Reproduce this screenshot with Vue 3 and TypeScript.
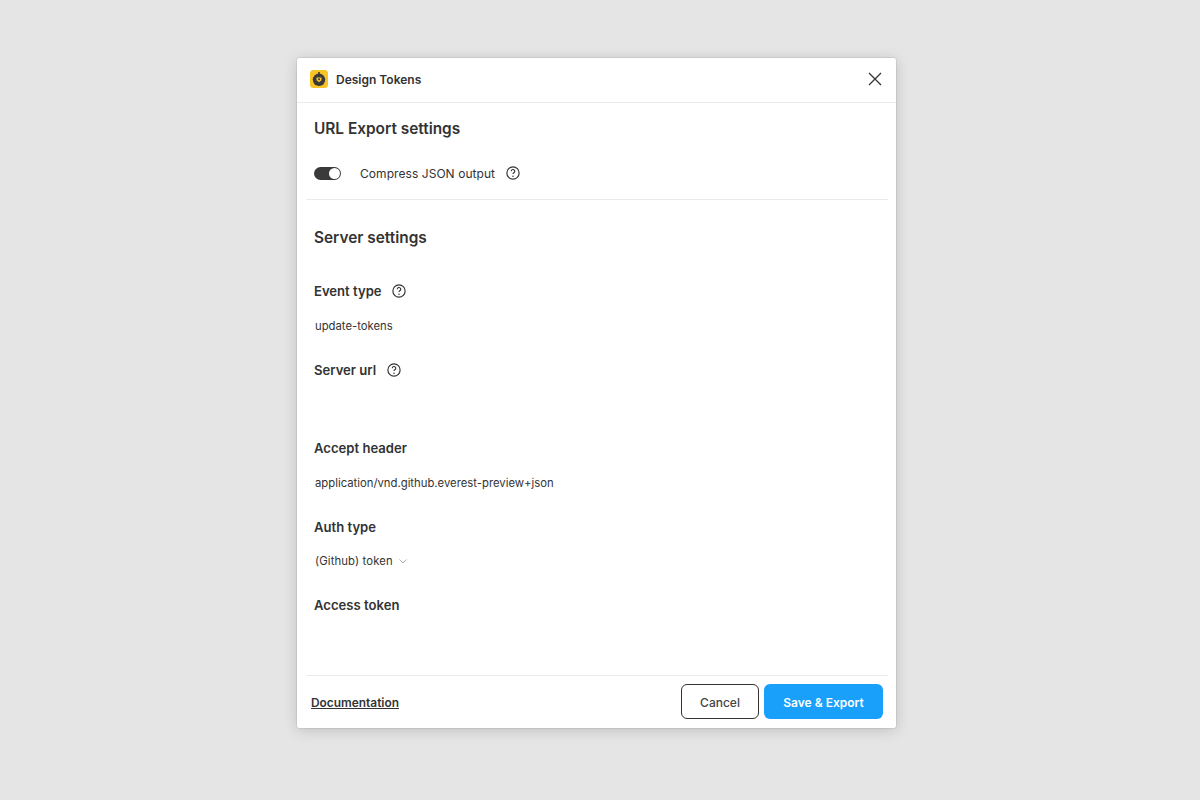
<script setup lang="ts">
const tip = 'M9 9a3 3 0 1 1 4.4 2.65c-.9.5-1.4 1.1-1.4 2.1'
</script>

<template>
  <div class="page">
    <section class="dialog">
      <header class="head">
        <span class="logo">
          <svg width="18" height="18" viewBox="0 0 18 18">
            <rect width="18" height="18" rx="3.5" fill="#f7c325" />
            <circle cx="9" cy="9.8" r="6.2" fill="#3a3a3a" />
            <rect x="8.2" y="2" width="1.6" height="2.4" fill="#3a3a3a" />
            <path d="M6.500 7.600h5v2.600l-2.500 2-2.500-2z" fill="#f7c325" />
            <circle cx="9" cy="9.300" r="1" fill="#3a3a3a" />
          </svg>
        </span>
        <span class="app">Design Tokens</span>
        <svg class="close" width="14" height="14" viewBox="0 0 14 14">
          <path d="M1 1l12 12M13 1L1 13" stroke="#333" stroke-width="1.3" fill="none" />
        </svg>
      </header>

      <div class="body">
        <h2 class="h-first">URL Export settings</h2>
        <div class="toggle-row">
          <span class="toggle"><span class="knob"></span></span>
          <span class="toggle-label">Compress JSON output</span>
          <svg class="q" width="14" height="14" viewBox="0 0 24 24">
            <circle cx="12" cy="12" r="10.500" fill="none" stroke="#333" stroke-width="2" />
            <path :d="tip" fill="none" stroke="#333" stroke-width="2" />
            <circle cx="12" cy="17.400" r="1.300" fill="#333" />
          </svg>
        </div>
        <div class="rule"></div>

        <h2 class="h-second">Server settings</h2>

        <div class="field f-event">
          <label>Event type
            <svg class="q" width="14" height="14" viewBox="0 0 24 24">
              <circle cx="12" cy="12" r="10.500" fill="none" stroke="#333" stroke-width="2" />
              <path :d="tip" fill="none" stroke="#333" stroke-width="2" />
              <circle cx="12" cy="17.400" r="1.300" fill="#333" />
            </svg>
          </label>
          <div class="value">update-tokens</div>
        </div>
        <div class="field">
          <label>Server url
            <svg class="q" width="14" height="14" viewBox="0 0 24 24">
              <circle cx="12" cy="12" r="10.500" fill="none" stroke="#333" stroke-width="2" />
              <path :d="tip" fill="none" stroke="#333" stroke-width="2" />
              <circle cx="12" cy="17.400" r="1.300" fill="#333" />
            </svg>
          </label>
          <div class="value"></div>
        </div>
        <div class="field">
          <label>Accept header</label>
          <div class="value">application/vnd.github.everest-preview+json</div>
        </div>
        <div class="field">
          <label>Auth type</label>
          <div class="value select">(Github) token
            <svg width="8" height="5" viewBox="0 0 8 5">
              <path d="M.5.5L4 4 7.500.5" fill="none" stroke="#aaa" stroke-width="1" />
            </svg>
          </div>
        </div>
        <div class="field last">
          <label>Access token</label>
          <div class="value"></div>
        </div>
      </div>

      <footer class="foot">
        <a class="doc">Documentation</a>
        <div class="btns">
          <button class="cancel">Cancel</button>
          <button class="save">Save &amp; Export</button>
        </div>
      </footer>
    </section>
  </div>
</template>

<style>
html, body { margin: 0; background: #e5e5e5; }
</style>

<style scoped>
.page {
  width: 1200px;
  height: 800px;
  background: #e5e5e5;
  display: flex;
  justify-content: center;
  align-items: flex-start;
  box-sizing: border-box;
  padding: 58px 7px 0 0;
  font-family: Inter, "Liberation Sans", sans-serif;
  color: #333;
}
.dialog {
  width: 599px;
  height: 670px;
  background: #fff;
  border-radius: 2px;
  box-shadow: 0 2px 14px rgba(0, 0, 0, .17), 0 0 0 .5px rgba(0, 0, 0, .12);
  display: flex;
  flex-direction: column;
}
.head {
  height: 45px;
  flex: none;
  box-sizing: border-box;
  display: flex;
  align-items: center;
  padding: 0 14px 2px 13px;
  border-bottom: 1px solid #ebebeb;
}
.logo { display: flex; margin-right: 8px; }
.app { font-size: 12px; font-weight: 600; flex: 1; }
.close { display: block; }
.body { flex: 1; padding: 0 8px 0 9px; }
h2 { margin: 0; padding: 0 8px; font-size: 15.400px; line-height: 20px; font-weight: 600; }
.h-first { padding-top: 16px; }
.toggle-row {
  display: flex;
  align-items: center;
  padding: 0 8px;
  margin-top: 26px;
  height: 16px;
}
.toggle {
  width: 27px;
  height: 13px;
  border-radius: 7px;
  background: #3a3a3a;
  position: relative;
  margin-right: 19px;
}
.knob {
  position: absolute;
  right: 1px;
  top: 1px;
  width: 11px;
  height: 11px;
  border-radius: 50%;
  background: #fff;
}
.toggle-label { font-size: 12px; letter-spacing: .06px; }
.toggle-label + .q { margin-left: 11px; }
.rule { height: 1px; background: #ebebeb; margin-top: 18px; }
.h-second { padding-top: 28px; }
.field { padding: 0 8px; height: 78.500px; }
.field.last { height: 60px; }
.f-event { margin-top: 35.250px; }
label {
  display: flex;
  align-items: center;
  font-size: 13.100px;
  line-height: 16px;
  font-weight: 600;
  gap: 10.500px;
  height: 16px;
}
.value {
  font-size: 11.300px;
  line-height: 16px;
  margin-top: 18.250px;
  padding-left: 1px;
  color: #333;
  height: 16px;
}
.select { display: flex; align-items: center; gap: 6px; letter-spacing: .13px; }
.foot {
  flex: none;
  height: 53px;
  margin: 0 8px 0 9px;
  border-top: 1px solid #ebebeb;
  display: flex;
  align-items: center;
  justify-content: space-between;
  padding: 0 5px 1px;
  box-sizing: border-box;
}
.doc { font-size: 11.900px; font-weight: 600; text-decoration: underline; color: #333; padding-top: 2px; }
.btns { display: flex; gap: 5px; }
button {
  height: 35px;
  border-radius: 6px;
  font-family: inherit;
  font-size: 12px;
  font-weight: 600;
  padding: 1px 0 0;
}
.cancel { width: 78px; background: #fff; border: 1px solid #333; color: #444; font-weight: 500; }
.save { width: 119px; background: #18a0fb; border: none; color: #fff; }
</style>
